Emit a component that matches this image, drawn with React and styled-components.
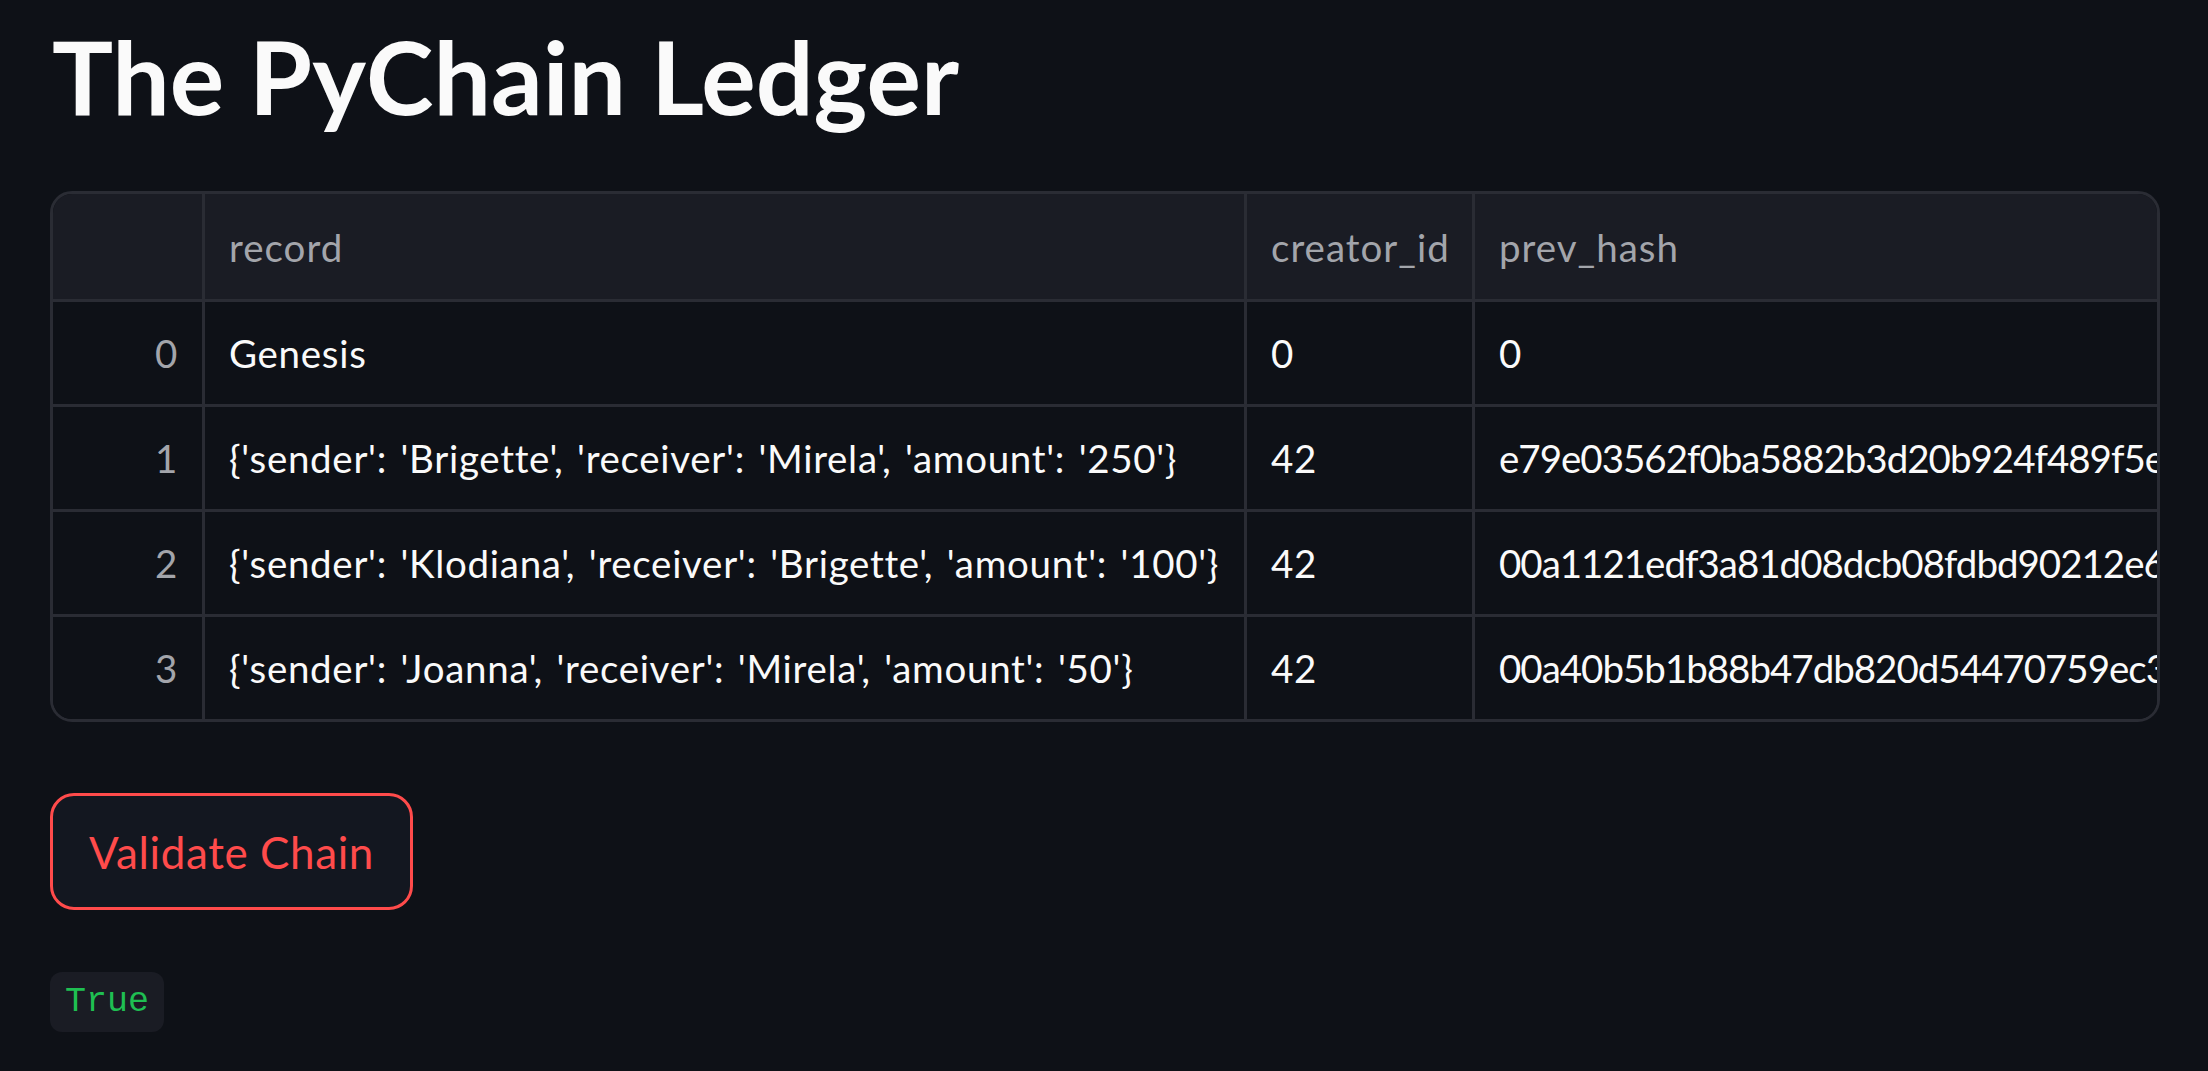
import React from "react";
import styled, { createGlobalStyle } from "styled-components";

const Global = createGlobalStyle`
  html, body { margin: 0; padding: 0; background: #0e1117; }
  body { font-family: Lato, "Noto Sans", sans-serif; color: #fafafa; }
`;

const Page = styled.main`
  padding: 0 48px 40px 50px;
  display: flex;
  flex-direction: column;
  align-items: flex-start;
`;

const Title = styled.h1`
  margin: 0;
  padding: 6px 0 0 2px;
  font-family: Lato, sans-serif;
  font-weight: 700;
  font-size: 102px;
  line-height: 140px;
  color: #fafafa;
`;

const Frame = styled.div`
  margin-top: 45px;
  align-self: stretch;
  border: 3px solid #2a2c34;
  border-radius: 22px;
  overflow: hidden;
  display: grid;
  grid-template-columns: 152px 1042px 228px 1fr;
`;

const Cell = styled.div`
  height: ${(p) => (p.$head ? "105px" : "102px")};
  display: flex;
  align-items: center;
  justify-content: ${(p) => (p.$index ? "flex-end" : "flex-start")};
  padding: ${(p) => (p.$index ? "0 24px 0 0" : "0 0 0 24px")};
  border-right: ${(p) => (p.$lastCol ? "none" : "3px solid #2a2c34")};
  border-bottom: ${(p) => (p.$lastRow ? "none" : "3px solid #2a2c34")};
  background: ${(p) => (p.$head ? "#1a1c24" : "#0e1117")};
  color: ${(p) => (p.$head || p.$index ? "#a3a5ab" : "#fafafa")};
  font-family: Lato, sans-serif;
  font-size: 38.5px;
  letter-spacing: ${(p) => (p.$hash ? "-1px" : p.$head ? "1px" : "0.7px")};
  word-spacing: ${(p) => (p.$hash ? "0" : "3px")};
  white-space: nowrap;
  overflow: hidden;
  min-width: 0;
`;

const Button = styled.button`
  margin-top: 71px;
  width: 363px;
  height: 117px;
  border: 3px solid #ff4b4b;
  border-radius: 24px;
  background: #131720;
  color: #ff4b4b;
  font-family: Lato, sans-serif;
  font-size: 44px;
  letter-spacing: 0.6px;
  cursor: pointer;
`;

const Code = styled.code`
  margin-top: 62px;
  height: 60px;
  padding: 0 15px;
  display: flex;
  align-items: center;
  background: #1a1c24;
  border-radius: 12px;
  color: #1fbf52;
  font-family: "Liberation Mono", monospace;
  font-size: 35px;
`;

const columns = ["record", "creator_id", "prev_hash"];
const rows = [
  ["0", "Genesis", "0", "0"],
  ["1", "{'sender': 'Brigette', 'receiver': 'Mirela', 'amount': '250'}", "42", "e79e03562f0ba5882b3d20b924f489f5e2c9a1f07d3b"],
  ["2", "{'sender': 'Klodiana', 'receiver': 'Brigette', 'amount': '100'}", "42", "00a1121edf3a81d08dcb08fdbd90212e6c4b0f3a9d21"],
  ["3", "{'sender': 'Joanna', 'receiver': 'Mirela', 'amount': '50'}", "42", "00a40b5b1b88b47db820d54470759ec3f1e2d8b7a604"],
];

export default function App() {
  return (
    <>
      <Global />
      <Page>
        <Title>The PyChain Ledger</Title>
        <Frame>
          <Cell $head $index />
          {columns.map((c, i) => (
            <Cell key={c} $head $lastCol={i === columns.length - 1}>
              {c}
            </Cell>
          ))}
          {rows.map((r, ri) =>
            r.map((v, ci) => (
              <Cell
                key={ri + "-" + ci}
                $index={ci === 0}
                $hash={ci === 3}
                $lastCol={ci === r.length - 1}
                $lastRow={ri === rows.length - 1}
              >
                {v}
              </Cell>
            ))
          )}
        </Frame>
        <Button>Validate Chain</Button>
        <Code>True</Code>
      </Page>
    </>
  );
}
